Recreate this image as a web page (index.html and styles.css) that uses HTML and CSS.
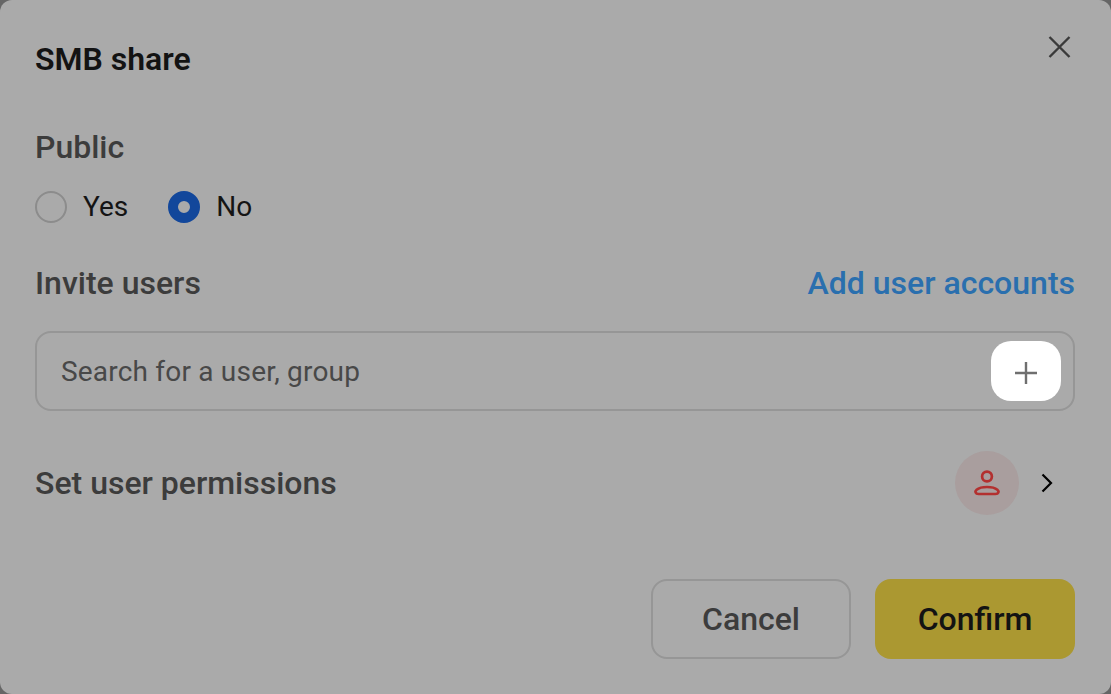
FILE: index.html
```html
<!DOCTYPE html>
<html lang="en">
<head>
    <meta charset="UTF-8">
    <title>SMB share</title>
    <link rel="stylesheet" href="styles.css">
</head>
<body>
    <div class="dialog">
        <div class="dialog-head">
            <h1 class="dialog-title">SMB share</h1>
            <button class="close-btn" type="button" aria-label="Close">
                <svg width="26" height="26" viewBox="0 0 26 26"><path d="M2.5 3 L22.5 23 M22.5 3 L2.5 23" stroke="#3a3a3a" stroke-width="2.4" fill="none"/></svg>
            </button>
        </div>

        <h2 class="section-label">Public</h2>
        <div class="radio-row">
            <label class="radio-item"><span class="radio"></span><span class="radio-text">Yes</span></label>
            <label class="radio-item"><span class="radio radio-on"></span><span class="radio-text">No</span></label>
        </div>

        <div class="invite-head">
            <h2 class="section-label">Invite users</h2>
            <a class="add-link" href="#">Add user accounts</a>
        </div>
        <div class="search-box">
            <span class="search-text">Search for a user, group</span>
            <button class="plus-btn" type="button" aria-label="Add">
                <svg class="plus-icon" width="22" height="22" viewBox="0 0 22 22"><path d="M11 0 V22 M0 11 H22" stroke="#6f6f6f" stroke-width="2.4" fill="none"/></svg>
            </button>
        </div>

        <div class="perm-row">
            <h2 class="section-label">Set user permissions</h2>
            <div class="perm-right">
                <span class="avatar">
                    <svg width="28" height="28" viewBox="0 0 28 28" fill="none" stroke="#b3302f" stroke-width="2.7"><circle cx="14" cy="7.5" r="4.9"/><path d="M5.5 25 C2.5 25 1.5 22.6 3.6 20.8 C6 18.8 10 18 14 18 C18 18 22 18.8 24.4 20.8 C26.5 22.6 25.5 25 22.5 25 Z"/></svg>
                </span>
                <svg class="chevron" width="12" height="20" viewBox="0 0 12 20"><path d="M1.5 1.5 L10 10 L1.5 18.5" stroke="#000" stroke-width="2.2" fill="none"/></svg>
            </div>
        </div>

        <div class="dialog-foot">
            <button class="btn btn-cancel" type="button">Cancel</button>
            <button class="btn btn-confirm" type="button">Confirm</button>
        </div>
    </div>
</body>
</html>
```

FILE: styles.css
```css
* {
    margin: 0;
    padding: 0;
    box-sizing: border-box;
    font-family: 'Roboto', sans-serif;
}

html, body {
    height: 100%;
}

body {
    background: #666666;
    overflow: hidden;
}

.dialog {
    height: 694px;
    padding: 36px 36px 35px 35px;
    background: #aaaaaa;
    border-radius: 12px;
    display: flex;
    flex-direction: column;
}

.dialog-head {
    display: flex;
    justify-content: space-between;
    align-items: flex-start;
    height: 92px;
}

.dialog-title {
    font-size: 32px;
    line-height: 46px;
    font-weight: 600;
    color: #131313;
}

.close-btn {
    background: none;
    border: none;
    margin-right: 2px;
    margin-top: -2px;
    width: 26px;
    height: 26px;
}

.section-label {
    font-size: 32px;
    line-height: 38px;
    font-weight: 500;
    color: #3c3c3c;
}

.radio-row {
    display: flex;
    gap: 40px;
    margin-top: 25px;
    height: 32px;
}

.radio-item {
    display: flex;
    align-items: center;
    gap: 16px;
    font-size: 28px;
    color: #141414;
}

.radio-text {
    margin-bottom: 2px;
}

.radio {
    width: 32px;
    height: 32px;
    border: 2px solid #8c8c8c;
    border-radius: 50%;
}

.radio-on {
    border: 10px solid #12479b;
    background: #aaaaaa;
}

.invite-head {
    display: flex;
    justify-content: space-between;
    align-items: center;
    margin-top: 41px;
}

.add-link {
    font-size: 32px;
    line-height: 38px;
    font-weight: 500;
    color: #2a6fae;
    text-decoration: none;
}

.search-box {
    display: flex;
    justify-content: space-between;
    align-items: center;
    height: 80px;
    margin-top: 29px;
    padding: 0 12px 0 24px;
    border: 2px solid #969696;
    border-radius: 16px;
}

.search-text {
    font-size: 28px;
    letter-spacing: 0.2px;
    color: #484848;
}

.plus-btn {
    width: 70px;
    height: 60px;
    border: none;
    border-radius: 20px;
    background: #ffffff;
    display: flex;
    align-items: center;
    justify-content: center;
}

.plus-icon {
    margin-top: 3px;
}

.perm-row {
    display: flex;
    justify-content: space-between;
    align-items: center;
    height: 64px;
    margin-top: 40px;
}

.perm-right {
    display: flex;
    align-items: center;
    gap: 22px;
    padding-right: 22px;
}

.avatar {
    width: 64px;
    height: 64px;
    border-radius: 50%;
    background: #a99e9e;
    display: flex;
    align-items: center;
    justify-content: center;
}

.dialog-foot {
    display: flex;
    justify-content: flex-end;
    gap: 24px;
    margin-top: auto;
}

.btn {
    width: 200px;
    height: 80px;
    border-radius: 16px;
    font-size: 32px;
    font-weight: 500;
}

.btn-cancel {
    background: transparent;
    border: 2px solid #969696;
    color: #3c3c3c;
}

.btn-confirm {
    background: #ab9831;
    border: none;
    color: #131313;
}
```
